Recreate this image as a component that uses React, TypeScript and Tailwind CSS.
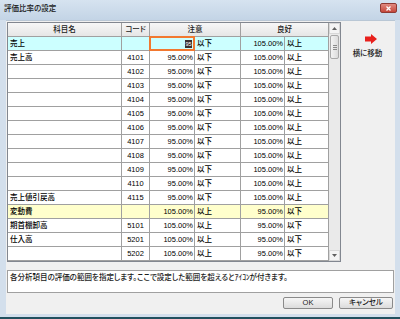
import React from "react";

type Row = {
  label: string;
  code: string;
  v1: string;
  u1: string;
  v2: string;
  u2: string;
  bg?: string;
  sel?: boolean;
};

const rows: Row[] = [
  { label: "売上", code: "", v1: "", u1: "以下", v2: "105.00%", u2: "以上", bg: "bg-[#ccffff]", sel: true },
  { label: "売上高", code: "4101", v1: "95.00%", u1: "以下", v2: "105.00%", u2: "以上" },
  ...["4102", "4103", "4104", "4105", "4106", "4107", "4108", "4109", "4110"].map((c) => ({
    label: "",
    code: c,
    v1: "95.00%",
    u1: "以下",
    v2: "105.00%",
    u2: "以上",
  })),
  { label: "売上値引戻高", code: "4115", v1: "95.00%", u1: "以下", v2: "105.00%", u2: "以上" },
  { label: "変動費", code: "", v1: "105.00%", u1: "以上", v2: "95.00%", u2: "以下", bg: "bg-[#ffffcc]" },
  { label: "期首棚卸高", code: "5101", v1: "105.00%", u1: "以上", v2: "95.00%", u2: "以下" },
  { label: "仕入高", code: "5201", v1: "105.00%", u1: "以上", v2: "95.00%", u2: "以下" },
  { label: "", code: "5202", v1: "105.00%", u1: "以上", v2: "95.00%", u2: "以下" },
];

export default function App() {
  return (
    <div
      className="w-[400px] h-[319px] flex flex-col bg-[#d3dfec] border-b-2 border-[#22505e] text-[7.5px] leading-none text-black font-medium [font-feature-settings:'palt'] overflow-hidden"
      style={{ fontFamily: '"Liberation Sans", "Noto Sans CJK JP", sans-serif' }}
    >
      {/* title bar */}
      <div className="h-[20px] shrink-0 flex items-start justify-between pl-[4px] pr-[3px] bg-gradient-to-b from-[#d6e3f0] to-[#c3d4e6]">
        <span className="mt-[5px] text-[7.5px] text-[#1a1a1a]">評価比率の設定</span>
        <div className="mt-[3px] w-[17px] h-[10px] rounded-[2px] bg-gradient-to-b from-[#e08a80] to-[#c4453a] border border-[#8e3a33] flex items-center justify-center">
          <svg width="5" height="5" viewBox="0 0 5 5">
            <path d="M0.5 0.5 L4.5 4.5 M4.5 0.5 L0.5 4.5" stroke="#ffffff" strokeWidth="1.3" />
          </svg>
        </div>
      </div>

      {/* body */}
      <div className="flex-1 ml-[6px] mr-[5px] mb-[3px] bg-[#f0f0f0] border-t border-[#b9c7d5] px-[1px] pt-[1px] flex flex-col">
        <div className="flex">
          {/* grid */}
          <div className="w-[334px] h-[240px] border border-[#828790] bg-white flex">
            <div className="w-[321px] flex flex-col">
              <div className="h-[14px] flex border-b border-[#a0a0a0] bg-gradient-to-b from-[#f7f7f7] to-[#e6e6e6] text-[#222]">
                <div className="w-[114px] border-r border-[#a0a0a0] flex items-center justify-center">科目名</div>
                <div className="w-[28px] border-r border-[#a0a0a0] flex items-center justify-center">コード</div>
                <div className="w-[91px] border-r border-[#a0a0a0] flex items-center justify-center">注意</div>
                <div className="w-[88px] border-r border-[#a0a0a0] flex items-center justify-center">良好</div>
              </div>
              {rows.map((r, i) => (
                <div key={i} className={`h-[14px] flex border-b border-[#a0a0a0] ${r.bg ?? "bg-white"}`}>
                  <div className="w-[114px] border-r border-[#a0a0a0] flex items-center pl-[2px]">{r.label}</div>
                  <div className="w-[28px] border-r border-[#a0a0a0] flex items-center justify-center">{r.code}</div>
                  <div className="relative w-[45px] border-r border-[#a0a0a0] flex items-center justify-end pr-[1px]">
                    {r.sel ? (
                      <>
                        <div className="absolute -left-[1px] -top-[1px] w-[46px] h-[15px] border-2 border-[#f2782f]" />
                        <span className="mr-[1px] px-[0.5px] bg-[#3a3030] text-white text-[5.5px] leading-[8px]">95</span>
                      </>
                    ) : (
                      r.v1
                    )}
                  </div>
                  <div className="w-[46px] border-r border-[#a0a0a0] flex items-center pl-[2px]">{r.u1}</div>
                  <div className="w-[44px] border-r border-[#a0a0a0] flex items-center justify-end pr-[1px]">{r.v2}</div>
                  <div className="w-[44px] border-r border-[#a0a0a0] flex items-center pl-[2px]">{r.u2}</div>
                </div>
              ))}
            </div>
            {/* scrollbar */}
            <div className="w-[11px] flex flex-col bg-[#eaeaea]">
              <div className="h-[11px] flex items-center justify-center border border-[#d8d8d8] bg-[#f4f4f4]">
                <svg width="5" height="3" viewBox="0 0 5 3">
                  <path d="M0 3 L2.5 0 L5 3 Z" fill="#606060" />
                </svg>
              </div>
              <div className="h-[24px] mx-[1px] mt-[1px] rounded-[2px] border border-[#a9a9a9] bg-gradient-to-r from-[#f3f3f3] to-[#dcdcdc] flex flex-col items-center justify-center gap-[1px]">
                <div className="w-[4px] h-px bg-[#8a8a8a]" />
                <div className="w-[4px] h-px bg-[#8a8a8a]" />
                <div className="w-[4px] h-px bg-[#8a8a8a]" />
              </div>
              <div className="flex-1" />
              <div className="h-[11px] flex items-center justify-center border border-[#d8d8d8] bg-[#f4f4f4]">
                <svg width="5" height="3" viewBox="0 0 5 3">
                  <path d="M0 0 L2.5 3 L5 0 Z" fill="#606060" />
                </svg>
              </div>
            </div>
          </div>

          {/* right panel */}
          <div className="flex-1 flex flex-col items-center pt-[12px]">
            <svg width="12" height="10" viewBox="0 0 12 10" className="ml-[6px]">
              <path d="M0 2.5 H6 V0 L12 5 L6 10 V7.5 H0 Z" fill="#e8201c" />
            </svg>
            <span className="mt-[6px] text-[#1a1a1a]">横に移動</span>
          </div>
        </div>

        {/* description */}
        <div className="mt-[8px] h-[23px] border border-[#a0a0a0] bg-white pl-[2px] pt-[3px] text-[#1a1a1a]">
          各分析項目の評価の範囲を指定します。ここで設定した範囲を超えるとｱｲｺﾝが付きます。
        </div>

        {/* buttons */}
        <div className="mt-[4px] flex justify-end gap-[6px] pr-[1px]">
          <button className="w-[50px] h-[12px] rounded-[2px] border border-[#8a8a8a] bg-gradient-to-b from-[#f6f6f6] to-[#dcdcdc] flex items-center justify-center text-[7.5px] text-[#1a1a1a]">
            OK
          </button>
          <button className="w-[54px] h-[12px] rounded-[2px] border border-[#8a8a8a] bg-gradient-to-b from-[#f6f6f6] to-[#dcdcdc] flex items-center justify-center text-[7.5px] text-[#1a1a1a]">
            キャンセル
          </button>
        </div>
      </div>
    </div>
  );
}
